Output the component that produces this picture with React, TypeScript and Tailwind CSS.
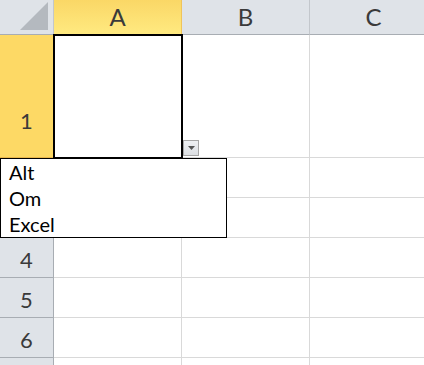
import React from "react";

const cols = ["A", "B", "C"];
const rows = [
  { n: 1, h: "h-[123px]" },
  { n: 2, h: "h-[40px]" },
  { n: 3, h: "h-[40px]" },
  { n: 4, h: "h-[40px]" },
  { n: 5, h: "h-[40px]" },
  { n: 6, h: "h-[40px]" },
  { n: 7, h: "h-[40px]" },
];

export default function App() {
  return (
    <div className="relative w-[424px] h-[365px] overflow-hidden bg-white font-['Lato',sans-serif] text-[#3a3a3a]">
      {/* Column headers */}
      <div className="flex h-[35px]">
        <div className="relative w-[54px] flex-none border-r border-b border-r-[#c3c7cc] border-b-[#a8adb3] bg-[#dfe3e8] overflow-hidden">
          <svg className="absolute left-0 top-0" width="53" height="34" viewBox="0 0 53 34">
            <polygon points="48,2 48,30 20,30" fill="#b4b9bf" />
          </svg>
        </div>
        {cols.map((c) => (
          <div
            key={c}
            className={
              c === "A"
                ? "w-[128px] flex-none flex items-center justify-center border-r border-b border-r-[#f0c45a] border-b-[#e5ac3e] bg-gradient-to-b from-[#fad766] to-[#ffea80] text-[24px] leading-none"
                : "w-[128px] flex-none flex items-center justify-center border-r border-b border-r-[#c3c7cc] border-b-[#a8adb3] bg-[#dfe3e8] text-[24px] leading-none"
            }
          >
            {c}
          </div>
        ))}
      </div>

      {/* Rows */}
      {rows.map((r) => (
        <div key={r.n} className={`flex ${r.h}`}>
          <div
            className={
              r.n === 1
                ? "w-[54px] flex-none flex items-end justify-center pb-[24px] border-r border-b border-r-[#e8b64a] border-b-[#e8b64a] bg-[#fdd965] text-[22px] leading-[24px]"
                : "w-[54px] flex-none flex items-center justify-center pt-[5px] border-r border-b border-r-[#a8adb3] border-b-[#a8adb3] bg-[#dfe3e8] text-[22px] leading-[24px]"
            }
          >
            {r.n}
          </div>
          {cols.map((c) => (
            <div key={c} className="w-[128px] flex-none border-r border-b border-[#d9d9d9]" />
          ))}
        </div>
      ))}

      {/* Selected cell A1 */}
      <div className="absolute left-[53px] top-[34px] w-[130px] h-[125px] border-2 border-black" />

      {/* Validation drop-down button */}
      <div className="absolute left-[183px] top-[140px] w-[16px] h-[16px] border border-[#a6a6a6] bg-gradient-to-b from-[#eef0f3] to-[#dcdfe3] flex items-center justify-center">
        <svg width="7" height="4" viewBox="0 0 7 4">
          <polygon points="0,0 7,0 3.5,4" fill="#555" />
        </svg>
      </div>

      {/* Drop-down list */}
      <div className="absolute left-0 top-[158px] w-[227px] h-[80px] border border-black bg-white pl-[8px] text-[20px] leading-[26px] text-black">
        <div>Alt</div>
        <div>Om</div>
        <div>Excel</div>
      </div>
    </div>
  );
}
